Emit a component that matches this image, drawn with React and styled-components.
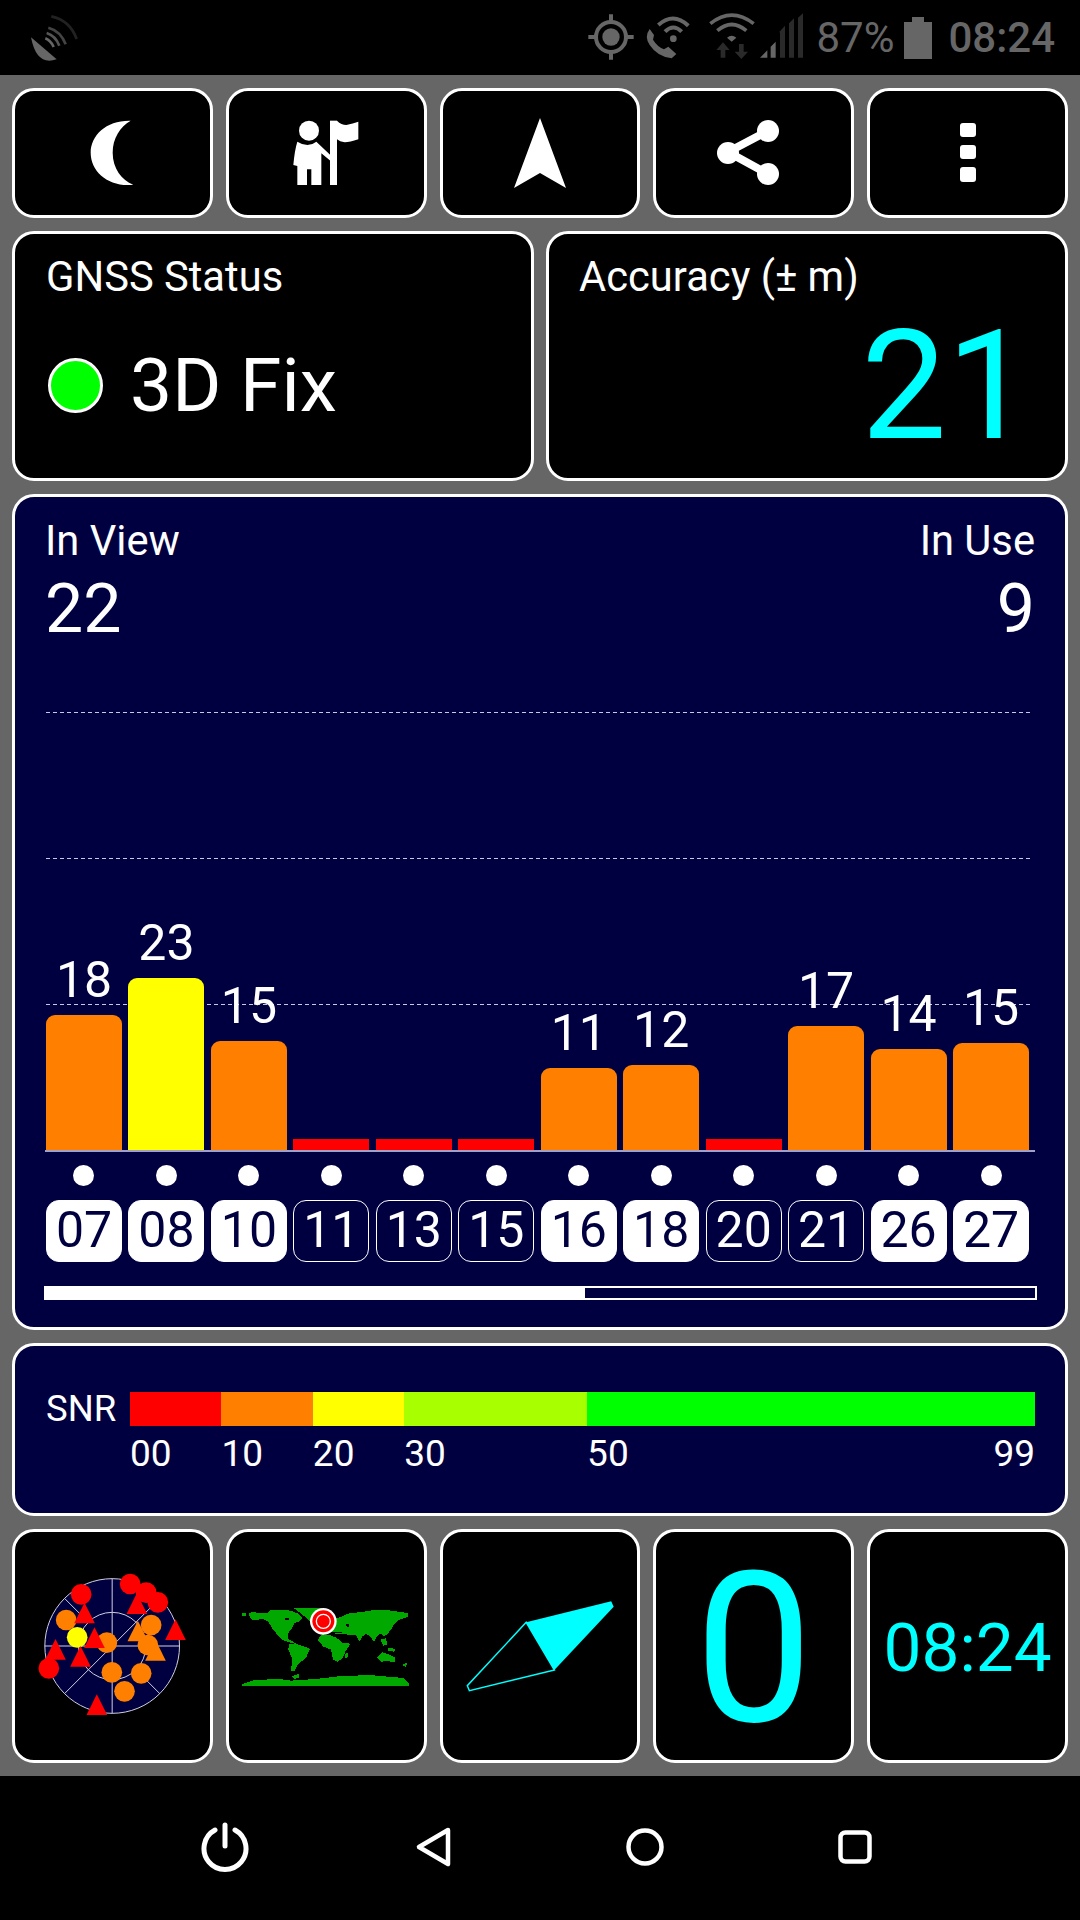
import React from 'react';
import styled, { createGlobalStyle } from 'styled-components';

const GlobalStyle = createGlobalStyle`
    html, body {
        margin: 0;
        padding: 0;
        background: #000;
        font-family: Roboto, "Liberation Sans", sans-serif;
    }
`;

const NAVY = '#000040';
const CYAN = '#00ffff';
const GRAY = '#666666';
const RED = '#ff0000';
const ORANGE = '#ff8000';
const YELLOW = '#ffff00';

const satellites = [
    { id: '07', snr: 18, h: 135, color: ORANGE, used: true },
    { id: '08', snr: 23, h: 172, color: YELLOW, used: true },
    { id: '10', snr: 15, h: 109, color: ORANGE, used: true },
    { id: '11', h: 11, color: RED },
    { id: '13', h: 11, color: RED },
    { id: '15', h: 11, color: RED },
    { id: '16', snr: 11, h: 82, color: ORANGE, used: true },
    { id: '18', snr: 12, h: 85, color: ORANGE, used: true },
    { id: '20', h: 11, color: RED },
    { id: '21', snr: 17, h: 124, color: ORANGE },
    { id: '26', snr: 14, h: 101, color: ORANGE, used: true },
    { id: '27', snr: 15, h: 107, color: ORANGE, used: true },
];

const snrScale = [
    { from: '00', span: 10, color: RED },
    { from: '10', span: 10, color: ORANGE },
    { from: '20', span: 10, color: YELLOW },
    { from: '30', span: 20, color: '#a8ff00' },
    { from: '50', to: '99', span: 49, color: '#00ff00' },
];

// radar, drawn back to front, in 3x coordinates
const radarMarks = [
    { t: 'c', x: 110, y: 180, c: ORANGE },
    { t: 'c', x: 155, y: 103, c: RED },
    { t: 't', x: 165, y: 128, c: RED },
    { t: 'c', x: 143, y: 232, c: YELLOW },
    { t: 'c', x: 232, y: 248, c: ORANGE },
    { t: 't', x: 195, y: 202, c: RED },
    { t: 't', x: 78, y: 237, c: RED },
    { t: 't', x: 153, y: 258, c: RED },
    { t: 'c', x: 58, y: 325, c: RED },
    { t: 'c', x: 302, y: 72, c: RED },
    { t: 'c', x: 350, y: 98, c: RED },
    { t: 't', x: 322, y: 100, c: RED },
    { t: 'c', x: 385, y: 127, c: RED },
    { t: 't', x: 325, y: 182, c: ORANGE },
    { t: 'c', x: 365, y: 195, c: ORANGE },
    { t: 'c', x: 355, y: 255, c: ORANGE },
    { t: 't', x: 378, y: 240, c: ORANGE },
    { t: 't', x: 438, y: 178, c: RED },
    { t: 'c', x: 247, y: 337, c: ORANGE },
    { t: 'c', x: 335, y: 340, c: ORANGE },
    { t: 'c', x: 285, y: 394, c: ORANGE },
    { t: 't', x: 202, y: 403, c: RED },
];

const worldShapes = [
    '30,42 40,40 85,42 95,34 130,32 155,35 178,44 190,58 178,68 166,72 160,86 152,95 146,106 148,120 160,126 172,135 150,130 130,122 114,106 100,88 88,68 72,60 42,64 32,54',
    '165,28 215,26 250,26 235,45 215,68 200,55 182,40',
    '150,135 175,136 195,142 213,150 200,178 178,194 166,216 156,216 160,180 148,152',
    '236,122 248,106 272,108 292,116 312,132 334,134 320,156 312,176 296,188 282,182 276,152 252,142',
    '262,92 272,72 285,60 305,54 325,44 360,40 400,34 450,34 507,42 507,54 482,62 468,72 458,88 448,102 436,112 424,104 414,112 406,128 394,114 382,104 370,112 362,128 350,108 332,108 312,104 290,104 270,100',
    '415,176 430,160 450,166 470,176 466,190 446,186 426,188',
    '10,255 45,243 120,240 155,245 230,240 300,232 390,228 495,237 510,255 510,262 10,262',
    '160,232 178,225 182,235 165,240',
    '425,122 440,118 446,136 432,140',
    '446,146 470,150 465,158 448,155',
    '490,198 505,190 500,204',
    '10,42 22,42 22,50 10,50',
    '318,165 328,160 325,178 318,178',
];

const worldHoles = [
    '138,58 148,56 150,62 140,64',
    '272,100 308,98 310,101 275,103',
    '322,76 330,75 331,84 323,85',
];

const Page = styled.div`
    width: 1080px;
    height: 1920px;
    display: flex;
    flex-direction: column;
    overflow: hidden;
`;

const StatusBar = styled.div`
    height: 75px;
    flex: none;
    background: #000;
    display: flex;
    align-items: center;
    color: ${GRAY};
    padding: 0 25px 0 20px;
    box-sizing: border-box;
`;

const StatusRight = styled.div`
    margin-left: auto;
    display: flex;
    align-items: center;
`;

const StatusText = styled.span`
    font-size: ${(p) => p.size || 42}px;
    font-weight: ${(p) => p.weight || 400};
    line-height: 75px;
`;

const Battery = styled.div`
    width: 28px;
    height: 37px;
    margin: 5px 16px 0 10px;
    background: ${GRAY};
    position: relative;

    &::before {
        content: '';
        position: absolute;
        top: -5px;
        left: 8px;
        width: 12px;
        height: 5px;
        background: ${GRAY};
    }
`;

const Main = styled.div`
    flex: 1;
    background: ${GRAY};
    padding: 13px 12px;
    display: flex;
    flex-direction: column;
    gap: 13px;
    box-sizing: border-box;
`;

const Row = styled.div`
    display: grid;
    grid-template-columns: repeat(${(p) => p.cols}, 1fr);
    column-gap: ${(p) => p.gap}px;
    height: ${(p) => p.height}px;
    flex: none;
`;

const Card = styled.div`
    background: ${(p) => p.bg || '#000'};
    border: 3px solid #fff;
    border-radius: 22px;
    box-sizing: border-box;
    color: #fff;
`;

const IconCard = styled(Card)`
    display: flex;
    align-items: center;
    justify-content: center;
`;

const InfoCard = styled(Card)`
    padding: 21px 30px 0 ${(p) => p.left || 31}px;
`;

const Label = styled.div`
    font-size: 41.7px;
    line-height: 44px;
`;

const FixRow = styled.div`
    display: flex;
    align-items: center;
    margin-top: 41px;
    margin-left: 2px;
`;

const FixDot = styled.div`
    width: 55px;
    height: 55px;
    box-sizing: border-box;
    background: #00ff00;
    border: 3px solid #fff;
    border-radius: 50%;
`;

const FixText = styled.div`
    font-size: 75px;
    line-height: 90px;
    margin-left: 27px;
`;

const AccuracyValue = styled.div`
    font-size: 152px;
    line-height: 150px;
    color: ${CYAN};
    text-align: right;
    margin-top: 12px;
    padding-right: 3px;
`;

const SatPanel = styled(Card)`
    height: 836px;
    flex: none;
    padding: 22px 30px 0 30px;
`;

const CountRow = styled.div`
    display: flex;
    justify-content: space-between;
`;

const CountCol = styled.div`
    text-align: ${(p) => p.align || 'left'};
`;

const CountValue = styled.div`
    font-size: 68px;
    line-height: 70px;
    margin-top: 11px;
`;

const Chart = styled.div`
    position: relative;
    height: 440px;
    margin-top: 68px;
    box-sizing: border-box;
    border-bottom: 2px solid #a0a0c8;
`;

const GridLine = styled.div`
    position: absolute;
    left: 1px;
    right: 5px;
    top: ${(p) => p.top}px;
    height: 1px;
    background: repeating-linear-gradient(to right, #c8c8e0 0 4px, transparent 4px 7px);
`;

const SatGrid = styled.div`
    display: grid;
    grid-template-columns: repeat(12, 1fr);
    column-gap: 6.5px;
    width: 983px;
    margin-left: 1px;
`;

const BarGrid = styled(SatGrid)`
    position: relative;
    height: 100%;
    align-items: end;
`;

const BarCol = styled.div`
    display: flex;
    flex-direction: column;
    align-items: center;
`;

const BarValue = styled.div`
    font-size: 50px;
    line-height: 60px;
    margin-bottom: 5px;
`;

const Bar = styled.div`
    width: 100%;
    background: ${(p) => p.color};
    border-radius: ${(p) => (p.low ? 0 : '9px 9px 0 0')};
`;

const DotGrid = styled(SatGrid)`
    margin-top: 13px;
    justify-items: center;
`;

const UsedDot = styled.div`
    width: 21px;
    height: 21px;
    background: #fff;
    border-radius: 50%;
`;

const IdGrid = styled(SatGrid)`
    margin-top: 14px;
`;

const SatId = styled.div`
    height: 62px;
    box-sizing: border-box;
    border-radius: 13px;
    border: 1.5px solid #fff;
    background: ${(p) => (p.used ? '#fff' : 'transparent')};
    color: ${(p) => (p.used ? NAVY : '#fff')};
    font-size: 50px;
    line-height: 59px;
    text-align: center;
`;

const ScrollTrack = styled.div`
    margin: 24px -2px 0 -1px;
    height: 14px;
    box-sizing: border-box;
    border: 2px solid #fff;
`;

const ScrollThumb = styled.div`
    width: 54.5%;
    height: 100%;
    background: #fff;
`;

const SnrPanel = styled(Card)`
    height: 173px;
    flex: none;
    padding: 46px 30px 0 31px;
    display: grid;
    grid-template-columns: 84px 1fr;
    align-content: start;
`;

const SnrLabel = styled.div`
    font-size: 36.5px;
    line-height: 34px;
`;

const SnrScale = styled.div`
    display: flex;
`;

const SnrSegment = styled.div`
    flex: ${(p) => p.span} 0 0;
    height: 34px;
    background: ${(p) => p.color};
`;

const SnrTicks = styled.div`
    grid-column: 2;
    display: flex;
    margin-top: 6px;
`;

const SnrTick = styled.div`
    flex: ${(p) => p.span} 0 0;
    display: flex;
    justify-content: space-between;
    font-size: 37px;
    line-height: 44px;
`;

const BigValue = styled.div`
    color: ${CYAN};
    font-size: ${(p) => p.size}px;
    line-height: 1;
    text-align: center;
    margin-top: ${(p) => p.drop}px;
`;

const NavBar = styled.div`
    height: 144px;
    flex: none;
    background: #000;
    display: grid;
    grid-template-columns: repeat(4, 210px);
    justify-content: center;
    justify-items: center;
    align-items: center;
    padding-bottom: 2px;
    box-sizing: border-box;
`;

const StatusLeftIcon = () => (
    <svg width="70" height="65" viewBox="0 0 210 195">
        <path d="M33 97 L110 163 Q50 185 33 97Z" fill="#666" />
        <g fill="none" strokeWidth="8">
            <path d="M76 100 Q92 106 101 126" stroke="#666" />
            <path d="M80 84 Q106 92 118 122" stroke="#555" />
            <path d="M85 68 Q122 78 137 118" stroke="#444" />
            <path d="M94 34 Q150 46 170 102" stroke="#222" />
        </g>
    </svg>
);

const StatusIcons = () => (
    <svg width="240" height="65" viewBox="-9 0 720 195">
        <g fill="none" stroke="#666" strokeWidth="12">
            <circle cx="96" cy="96" r="45" />
            <path d="M96 28 V50 M96 142 V164 M28 96 H50 M142 96 H164" />
        </g>
        <circle cx="96" cy="96" r="26" fill="#666" />
        <g fill="none" stroke="#666" strokeWidth="12">
            <path d="M238 60 Q283 20 328 62" />
            <path d="M258 80 Q283 55 308 80" />
        </g>
        <circle cx="283" cy="101" r="10" fill="#666" />
        <path
            d="M212 72 L225 90 L222 104 Q235 125 255 133 L268 125 L292 147 L278 160 Q235 155 212 120 Q195 95 212 72Z"
            fill="#666"
        />
        <g fill="none" stroke="#666" strokeWidth="11">
            <path d="M394 56 Q458 5 524 56" />
            <path d="M415 77 Q458 40 502 77" />
        </g>
        <path d="M444 98 Q458 86 472 98 L458 110Z" fill="#666" />
        <g fill="#2a2a2a">
            <path d="M432 112 L452 135 H439 V158 H425 V135 H412Z" />
            <path d="M487 162 L507 140 H494 V117 H480 V140 H467Z" />
            <path d="M600 82 L618 62 V158 H603 V82Z M630 55 L645 40 V158 H630Z M657 38 L672 25 V158 H657Z" />
        </g>
        <path d="M543 158 L565 136 V158Z M575 125 L590 110 V158 H575Z" fill="#666" />
    </svg>
);

const MoonIcon = () => (
    <svg width="44.7" height="66" viewBox="270 150 134 198">
        <path
            d="M392 152 C320 150 272 195 272 248 C272 305 325 352 400 344 C365 330 338 295 338 248 C338 205 360 170 392 152Z"
            fill="#fff"
        />
    </svg>
);

const WaypointIcon = () => (
    <svg width="66" height="66" viewBox="880 150 198 198">
        <circle cx="928" cy="182" r="30" fill="#fff" />
        <path
            d="M893 215 Q925 235 950 215 L992 255 L992 272 L965 250 V345 H935 V298 H922 V345 H893 V288 L881 285 Q885 240 893 215Z"
            fill="#fff"
        />
        <path d="M991 152 H1012 V345 H991Z" fill="#fff" />
        <path d="M1012 152 Q1025 165 1040 165 Q1060 160 1076 155 V208 Q1050 217 1035 217 Q1020 215 1012 208Z" fill="#fff" />
    </svg>
);

const ArrowIcon = () => (
    <svg width="52" height="70" viewBox="514 117 52 70">
        <polygon points="540,117 566,187 540,172 514,187" fill="#fff" />
    </svg>
);

const ShareIcon = () => (
    <svg width="75" height="66" viewBox="717 121 75 66">
        <path d="M769 132 L729 153 L769 175" fill="none" stroke="#fff" strokeWidth="8" />
        <circle cx="729" cy="154" r="11" fill="#fff" />
        <circle cx="769" cy="132" r="11" fill="#fff" />
        <circle cx="769" cy="175" r="11" fill="#fff" />
    </svg>
);

const MoreIcon = () => (
    <svg width="16" height="60" viewBox="0 0 16 60">
        <rect y="0" width="16" height="14" rx="3" fill="#fff" />
        <rect y="22" width="16" height="14" rx="3" fill="#fff" />
        <rect y="44" width="16" height="15" rx="3" fill="#fff" />
    </svg>
);

const Radar = () => (
    <svg width="170" height="170" viewBox="-7.5 3 510 510" style={{ overflow: 'visible' }}>
        <circle cx="248" cy="258" r="202" fill={NAVY} stroke="#d0d0e0" strokeWidth="3" />
        <circle cx="248" cy="258" r="101" fill="none" stroke="#d0d0e0" strokeWidth="3" />
        <path
            d="M248 56 V460 M46 258 H450 M105 115 L176 186 M320 330 L391 401 M105 401 L391 115"
            stroke="#d0d0e0"
            strokeWidth="3"
        />
        {radarMarks.map((m, i) =>
            m.t === 'c' ? (
                <circle key={i} cx={m.x} cy={m.y} r="31" fill={m.c} />
            ) : (
                <polygon key={i} points={`${m.x},${m.y} ${m.x + 31},${m.y + 62} ${m.x - 31},${m.y + 62}`} fill={m.c} />
            )
        )}
    </svg>
);

const WorldMap = () => (
    <svg width="175" height="95" viewBox="0 0 525 285">
        <g fill="#00a800" shapeRendering="crispEdges">
            {worldShapes.map((s, i) => (
                <polygon key={i} points={s} />
            ))}
        </g>
        <g fill="#000" shapeRendering="crispEdges">
            {worldHoles.map((s, i) => (
                <polygon key={i} points={s} />
            ))}
        </g>
        <circle cx="253" cy="67" r="40" fill="#fff" />
        <circle cx="253" cy="67" r="33" fill="#ff0000" />
        <circle cx="253" cy="67" r="21" fill="none" stroke="#fff" strokeWidth="4" />
        <circle cx="253" cy="67" r="15" fill="#ff0000" />
    </svg>
);

const Compass = () => (
    <svg width="150" height="96" viewBox="465 1598 150 96">
        <polygon points="526.2,1622.3 467.3,1685.7 469.4,1690.7 554.4,1670" fill="none" stroke={CYAN} strokeWidth="1.5" />
        <polygon points="526.2,1622.3 611.2,1601.3 613.7,1606.7 554.4,1670" fill={CYAN} />
    </svg>
);

const PowerIcon = () => (
    <svg width="50" height="50" viewBox="0 0 50 50" fill="none" stroke="#fff" strokeWidth="5" strokeLinecap="round">
        <path d="M15 8 A21 21 0 1 0 35 8" />
        <path d="M25 3 V24" />
    </svg>
);

const BackIcon = () => (
    <svg width="40" height="42" viewBox="0 0 40 42" fill="none" stroke="#fff" strokeWidth="4.5" strokeLinejoin="round">
        <path d="M33 4 L4 21 L33 38Z" />
    </svg>
);

const HomeIcon = () => (
    <svg width="38" height="38" viewBox="0 0 38 38" fill="none" stroke="#fff" strokeWidth="4.5">
        <circle cx="19" cy="19" r="16.5" />
    </svg>
);

const RecentIcon = () => (
    <svg width="34" height="34" viewBox="0 0 34 34" fill="none" stroke="#fff" strokeWidth="4.5">
        <rect x="2.5" y="2.5" width="29" height="29" rx="5" />
    </svg>
);

const App = () => {
    return (
        <React.Fragment>
            <GlobalStyle />
            <Page>
                <StatusBar>
                    <StatusLeftIcon />
                    <StatusRight>
                        <StatusIcons />
                        <StatusText>87%</StatusText>
                        <Battery />
                        <StatusText size={42} weight={500}>08:24</StatusText>
                    </StatusRight>
                </StatusBar>
                <Main>
                    <Row cols={5} gap={13} height={130}>
                        <IconCard><MoonIcon /></IconCard>
                        <IconCard><WaypointIcon /></IconCard>
                        <IconCard><ArrowIcon /></IconCard>
                        <IconCard><ShareIcon /></IconCard>
                        <IconCard><MoreIcon /></IconCard>
                    </Row>
                    <Row cols={2} gap={12} height={250}>
                        <InfoCard>
                            <Label>GNSS Status</Label>
                            <FixRow>
                                <FixDot />
                                <FixText>3D Fix</FixText>
                            </FixRow>
                        </InfoCard>
                        <InfoCard left={30}>
                            <Label>Accuracy (± m)</Label>
                            <AccuracyValue>21</AccuracyValue>
                        </InfoCard>
                    </Row>
                    <SatPanel bg={NAVY}>
                        <CountRow>
                            <CountCol>
                                <Label>In View</Label>
                                <CountValue>22</CountValue>
                            </CountCol>
                            <CountCol align="right">
                                <Label>In Use</Label>
                                <CountValue>9</CountValue>
                            </CountCol>
                        </CountRow>
                        <Chart>
                            <GridLine top={0} />
                            <GridLine top={146} />
                            <GridLine top={292} />
                            <BarGrid>
                                {satellites.map((s) => (
                                    <BarCol key={s.id}>
                                        {s.snr && <BarValue>{s.snr}</BarValue>}
                                        <Bar color={s.color} low={!s.snr} style={{ height: s.h }} />
                                    </BarCol>
                                ))}
                            </BarGrid>
                        </Chart>
                        <DotGrid>
                            {satellites.map((s) => (
                                <UsedDot key={s.id} />
                            ))}
                        </DotGrid>
                        <IdGrid>
                            {satellites.map((s) => (
                                <SatId key={s.id} used={s.used}>{s.id}</SatId>
                            ))}
                        </IdGrid>
                        <ScrollTrack>
                            <ScrollThumb />
                        </ScrollTrack>
                    </SatPanel>
                    <SnrPanel bg={NAVY}>
                        <SnrLabel>SNR</SnrLabel>
                        <SnrScale>
                            {snrScale.map((s) => (
                                <SnrSegment key={s.from} span={s.span} color={s.color} />
                            ))}
                        </SnrScale>
                        <SnrTicks>
                            {snrScale.map((s) => (
                                <SnrTick key={s.from} span={s.span}>
                                    <span>{s.from}</span>
                                    {s.to && <span>{s.to}</span>}
                                </SnrTick>
                            ))}
                        </SnrTicks>
                    </SnrPanel>
                    <Row cols={5} gap={13} height={234}>
                        <IconCard><Radar /></IconCard>
                        <IconCard><WorldMap /></IconCard>
                        <IconCard><Compass /></IconCard>
                        <IconCard><BigValue size={210} drop={6}>0</BigValue></IconCard>
                        <IconCard><BigValue size={67.5} drop={4}>08:24</BigValue></IconCard>
                    </Row>
                </Main>
                <NavBar>
                    <PowerIcon />
                    <BackIcon />
                    <HomeIcon />
                    <RecentIcon />
                </NavBar>
            </Page>
        </React.Fragment>
    );
};

export default App;
